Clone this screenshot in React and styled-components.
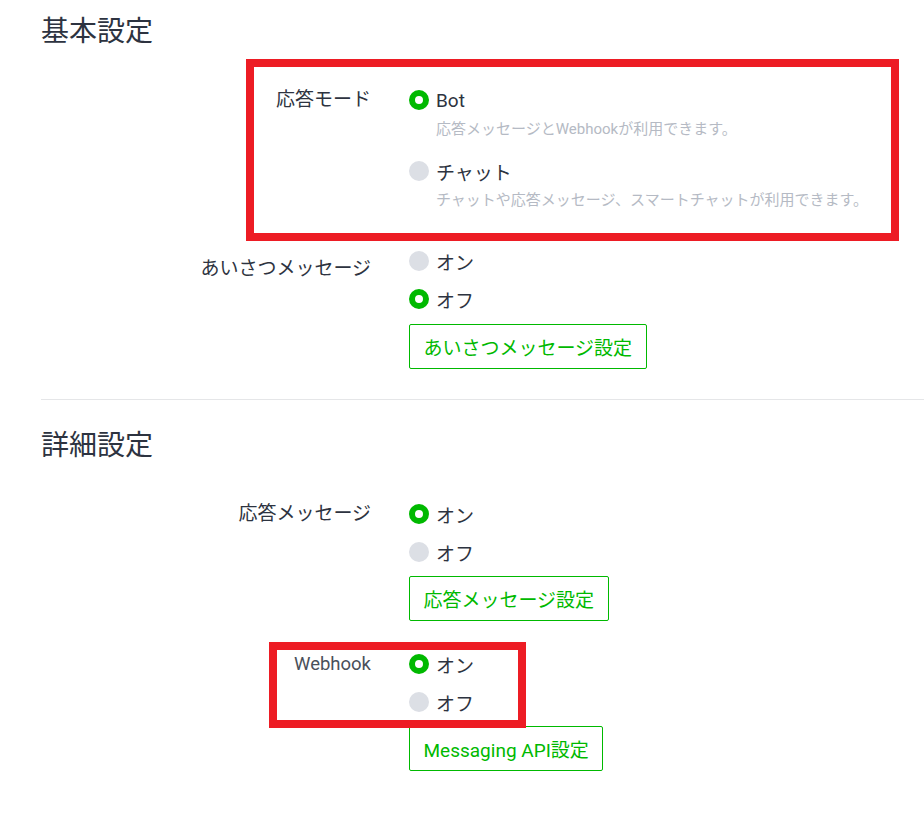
import React from "react";
import styled, { createGlobalStyle } from "styled-components";

const GlobalStyle = createGlobalStyle`
  html, body {
    margin: 0;
    padding: 0;
    background: #ffffff;
  }
  body {
    font-family: Roboto, "Noto Sans CJK JP", sans-serif;
    color: #2d3340;
  }
  * { box-sizing: border-box; }
`;

const Page = styled.div`
  position: relative;
  width: 924px;
  min-height: 823px;
  padding-left: 41px;
  overflow: hidden;
`;

const Section = styled.section`
  padding-top: ${(p) => p.$top}px;
  padding-bottom: ${(p) => p.$bottom}px;
  border-bottom: ${(p) => (p.$divider ? "1px solid #e5e6e8" : "none")};
`;

const Heading = styled.h2`
  margin: 0 0 29px;
  font-size: 28px;
  line-height: 40px;
  font-weight: 400;
  color: #2d3340;
`;

const FormList = styled.div`
  display: flex;
  flex-direction: column;
  gap: ${(p) => p.$gap}px;
`;

const FormRow = styled.div`
  display: flex;
  align-items: flex-start;
  gap: 38px;
`;

const Label = styled.div`
  width: 330px;
  flex: none;
  text-align: right;
  font-size: ${(p) => (p.$latin ? 18.5 : 19)}px;
  line-height: 38px;
  padding-top: ${(p) => p.$offset || 0}px;
  color: ${(p) => (p.$latin ? "#4a505a" : "#2d3340")};
`;

const Options = styled.div`
  display: flex;
  flex-direction: column;
  align-items: flex-start;
`;

const OptionRow = styled.label`
  display: flex;
  align-items: center;
  gap: 7px;
  height: 38px;
  font-size: 19px;
  color: #2d3340;
  cursor: pointer;
`;

const Radio = styled.span`
  width: 20px;
  height: 20px;
  border-radius: 50%;
  flex: none;
  background: ${(p) => (p.$checked ? "#ffffff" : "#dcdfe5")};
  border: ${(p) => (p.$checked ? "6px solid #00b900" : "none")};
`;

const Description = styled.div`
  padding-left: 27px;
  font-size: 15px;
  line-height: 20px;
  color: #b5bac4;
  margin-bottom: ${(p) => p.$mb || 0}px;
`;

const OutlineButton = styled.button`
  margin-top: ${(p) => p.$mt ?? 5}px;
  height: 45px;
  padding: 0 13.5px;
  border: 1px solid #00b900;
  border-radius: 2px;
  background: #ffffff;
  color: #00b900;
  font-family: Roboto, "Noto Sans CJK JP", sans-serif;
  font-size: 19px;
  cursor: pointer;
`;

const Highlight = styled.div`
  position: absolute;
  left: ${(p) => p.$x}px;
  top: ${(p) => p.$y}px;
  width: ${(p) => p.$w}px;
  height: ${(p) => p.$h}px;
  border: 8px solid #ed1c24;
  pointer-events: none;
`;

function Option({ checked, children }) {
  return (
    <OptionRow>
      <Radio $checked={checked} />
      <span>{children}</span>
    </OptionRow>
  );
}

export default function App() {
  return (
    <>
      <GlobalStyle />
      <Page>
        <Section $top={12} $bottom={30} $divider>
          <Heading>基本設定</Heading>
          <FormList $gap={32}>
            <FormRow>
              <Label>応答モード</Label>
              <Options>
                <Option checked>Bot</Option>
                <Description $mb={13}>応答メッセージとWebhookが利用できます。</Description>
                <Option>チャット</Option>
                <Description>チャットや応答メッセージ、スマートチャットが利用できます。</Description>
              </Options>
            </FormRow>
            <FormRow>
              <Label $offset={8}>あいさつメッセージ</Label>
              <Options>
                <Option>オン</Option>
                <Option checked>オフ</Option>
                <OutlineButton $mt={6}>あいさつメッセージ設定</OutlineButton>
              </Options>
            </FormRow>
          </FormList>
        </Section>
        <Section $top={26} $bottom={40}>
          <Heading>詳細設定</Heading>
          <FormList $gap={24}>
            <FormRow>
              <Label>応答メッセージ</Label>
              <Options>
                <Option checked>オン</Option>
                <Option>オフ</Option>
                <OutlineButton>応答メッセージ設定</OutlineButton>
              </Options>
            </FormRow>
            <FormRow>
              <Label $latin>Webhook</Label>
              <Options>
                <Option checked>オン</Option>
                <Option>オフ</Option>
                <OutlineButton>Messaging API設定</OutlineButton>
              </Options>
            </FormRow>
          </FormList>
        </Section>
        <Highlight $x={246} $y={59} $w={653} $h={182} />
        <Highlight $x={269} $y={642} $w={257} $h={86} />
      </Page>
    </>
  );
}
